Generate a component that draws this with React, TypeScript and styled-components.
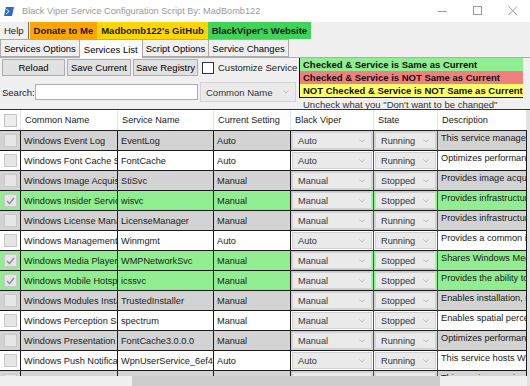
import React from 'react';
import styled, { createGlobalStyle } from 'styled-components';

const GlobalStyle = createGlobalStyle`
  html, body {
    margin: 0;
    padding: 0;
    background: #fff;
  }
  body {
    font-family: 'Liberation Sans', Arial, sans-serif;
    overflow: hidden;
  }
`;

const Window = styled.div`
  display: flex;
  flex-direction: column;
  width: 530px;
  height: 386px;
  overflow: hidden;
  background: #f0f0f0;
`;

const TitleBar = styled.div`
  display: flex;
  align-items: center;
  height: 22px;
  flex-shrink: 0;
  padding-left: 4px;
  background: #fff;
  color: #9a9a9a;
  font-size: 9.2px;
`;

const TitleText = styled.span`
  margin-left: 8px;
`;

const WindowControls = styled.div`
  display: flex;
  margin-left: auto;
  height: 100%;
`;

const ControlButton = styled.div`
  display: flex;
  align-items: center;
  justify-content: center;
  width: 35px;
  height: 100%;
`;

const MenuBar = styled.div`
  display: flex;
  height: 17px;
  flex-shrink: 0;
  background: #f0f0f0;
  font-size: 9.5px;
`;

const MenuItem = styled.div<{ $bg?: string }>`
  display: flex;
  align-items: center;
  padding: 0 4px;
  background: ${(p) => p.$bg || 'transparent'};
  font-weight: ${(p) => (p.$bg ? 700 : 400)};
  color: #1a1a1a;
`;

const MenuSeparator = styled.div`
  width: 1px;
  margin: 0 1px 0 0;
  background: #707070;
`;

const TabStrip = styled.div`
  display: flex;
  align-items: flex-end;
  height: 18px;
  flex-shrink: 0;
  font-size: 9.5px;
`;

const Tab = styled.div<{ $active?: boolean }>`
  display: flex;
  align-items: center;
  height: ${(p) => (p.$active ? '18px' : '16px')};
  padding: 0 ${(p) => (p.$active ? '4px' : '3px')};
  margin-bottom: ${(p) => (p.$active ? '-1px' : '0')};
  margin-right: -1px;
  border: 1px solid #acacac;
  border-bottom: ${(p) => (p.$active ? 'none' : '1px solid #acacac')};
  background: ${(p) => (p.$active ? '#fff' : '#f0f0f0')};
  color: #000;
  position: relative;
  z-index: ${(p) => (p.$active ? 1 : 0)};
`;

const Content = styled.div`
  display: flex;
  flex-direction: column;
  flex: 1;
  min-height: 0;
  border-top: 1px solid #acacac;
`;

const Toolbar = styled.div`
  display: grid;
  grid-template-columns: 298px 1fr;
  height: 51px;
  flex-shrink: 0;
  font-size: 9.5px;
`;

const ToolColumn = styled.div`
  display: flex;
  flex-direction: column;
  gap: 6px;
  padding: 1px 0 0 2px;
`;

const ButtonRow = styled.div`
  display: flex;
  align-items: center;
  gap: 2px;
  height: 17px;
`;

const Button = styled.div<{ $width: number }>`
  display: flex;
  align-items: center;
  justify-content: center;
  width: ${(p) => p.$width}px;
  height: 17px;
  box-sizing: border-box;
  border: 1px solid #adadad;
  background: #e1e1e1;
  color: #000;
`;

const CheckLabel = styled.label`
  display: flex;
  align-items: center;
  gap: 4px;
  margin-left: 2px;
  color: #1a1a1a;
`;

const BoxCheck = styled.span`
  width: 12px;
  height: 12px;
  box-sizing: border-box;
  border: 1px solid #333;
  background: #fff;
`;

const SearchRow = styled.div`
  display: flex;
  align-items: center;
  gap: 2px;
  height: 20px;
`;

const SearchLabel = styled.span`
  width: 31px;
  color: #1a1a1a;
`;

const SearchInput = styled.div`
  width: 163px;
  height: 16px;
  box-sizing: border-box;
  border: 1px solid #abadb3;
  background: #fff;
`;

const Combo = styled.div<{ $width: number; $height: number }>`
  display: flex;
  align-items: center;
  justify-content: space-between;
  width: ${(p) => p.$width}px;
  height: ${(p) => p.$height}px;
  box-sizing: border-box;
  padding: 0 6px 0 5px;
  border: 1px solid #d2d2d2;
  background: #eaeaea;
  color: #333;
  overflow: hidden;
  white-space: nowrap;
`;

const LegendColumn = styled.div`
  display: flex;
  flex-direction: column;
  padding-left: 1px;
`;

const Legend = styled.div`
  display: flex;
  flex-direction: column;
  width: 223px;
  border-left: 1px solid #111;
  border-bottom: 1px solid #111;
`;

const LegendRow = styled.div<{ $bg: string }>`
  height: 13px;
  line-height: 13px;
  padding-left: 3px;
  background: ${(p) => p.$bg};
  font-weight: 700;
  color: #111;
  white-space: nowrap;
`;

const Note = styled.div`
  padding: 1px 0 0 4px;
  line-height: 11px;
  color: #333;
  white-space: nowrap;
`;

const GridArea = styled.div`
  display: flex;
  flex: 1;
  min-height: 0;
  border-top: 1px solid #333;
  background: #fff;
`;

const GridMain = styled.div`
  display: flex;
  flex-direction: column;
  flex: 1;
  min-width: 0;
`;

const GridViewport = styled.div`
  flex: 1;
  min-height: 0;
  overflow: hidden;
  font-size: 9.2px;
`;

const cols = '21px 97px 96px 77px 83px 64px 1fr';

const HeaderRow = styled.div`
  display: grid;
  grid-template-columns: ${cols};
  height: 20px;
  border-bottom: 1px solid #222;
  background: #fff;
`;

const HeaderCell = styled.div<{ $first?: boolean }>`
  display: flex;
  align-items: center;
  justify-content: ${(p) => (p.$first ? 'center' : 'flex-start')};
  padding-left: ${(p) => (p.$first ? '0' : '4px')};
  border-right: 1px solid #e4e4e4;
  color: #1a1a1a;
  white-space: nowrap;
  overflow: hidden;
`;

const Row = styled.div<{ $bg: string }>`
  display: grid;
  grid-template-columns: ${cols};
  height: 19px;
  border-bottom: 1px solid #1a1a1a;
  background: ${(p) => p.$bg};
`;

const Cell = styled.div<{ $top?: boolean }>`
  display: flex;
  align-items: ${(p) => (p.$top ? 'flex-start' : 'center')};
  padding: ${(p) => (p.$top ? '2px 0 0 3px' : '0 0 0 3px')};
  border-right: 1px solid #1a1a1a;
  color: #1a1a1a;
  white-space: nowrap;
  overflow: hidden;
`;

const ComboCell = styled.div`
  display: flex;
  align-items: center;
  padding: 0 1px;
  border-right: 1px solid #555;
  overflow: hidden;
`;

const CheckCell = styled.div`
  display: flex;
  align-items: center;
  justify-content: center;
  border-right: 1px solid #1a1a1a;
`;

const GridCheck = styled.span<{ $header?: boolean }>`
  display: flex;
  align-items: center;
  justify-content: center;
  width: 13px;
  height: 13px;
  box-sizing: border-box;
  border: 1px solid ${(p) => (p.$header ? '#c4c4c4' : '#c8c8c8')};
  background: ${(p) => (p.$header ? '#ececec' : '#e6e6e6')};
`;

const HScroll = styled.div`
  display: flex;
  height: 10px;
  flex-shrink: 0;
  background: #f0f0f0;
`;

const HThumb = styled.div`
  width: 308px;
  height: 100%;
  margin-left: 132px;
  background: #cdcdcd;
`;

const VScroll = styled.div`
  width: 3px;
  background: #e2e2e2;
`;

const Chevron = () => (
  <svg width="6" height="4" viewBox="0 0 6 4">
    <path d="M0.5 0.5 L3 3 L5.5 0.5" fill="none" stroke="#b4b4b4" strokeWidth="0.8" />
  </svg>
);

const CheckMark = () => (
  <svg width="9" height="8" viewBox="0 0 9 8">
    <path d="M1 4 L3.5 6.5 L8 1" fill="none" stroke="#8a8a8a" strokeWidth="1.3" />
  </svg>
);

type Service = {
  name: string;
  svc: string;
  current: string;
  viper: string;
  state: string;
  desc: string;
  checked?: boolean;
};

const services: Service[] = [
  { name: 'Windows Event Log', svc: 'EventLog', current: 'Auto', viper: 'Auto', state: 'Running', desc: 'This service manages events and event logs.' },
  { name: 'Windows Font Cache Service', svc: 'FontCache', current: 'Auto', viper: 'Auto', state: 'Running', desc: 'Optimizes performance of applications by caching.' },
  { name: 'Windows Image Acquisition (WIA)', svc: 'StiSvc', current: 'Manual', viper: 'Manual', state: 'Stopped', desc: 'Provides image acquisition services.' },
  { name: 'Windows Insider Service', svc: 'wisvc', current: 'Manual', viper: 'Manual', state: 'Stopped', desc: 'Provides infrastructure support for the Windows Insider Program.', checked: true },
  { name: 'Windows License Manager Service', svc: 'LicenseManager', current: 'Manual', viper: 'Manual', state: 'Running', desc: 'Provides infrastructure support for the Microsoft Store.' },
  { name: 'Windows Management Instrumentation', svc: 'Winmgmt', current: 'Auto', viper: 'Auto', state: 'Running', desc: 'Provides a common interface and object model.' },
  { name: 'Windows Media Player Network Sharing Service', svc: 'WMPNetworkSvc', current: 'Manual', viper: 'Manual', state: 'Stopped', desc: 'Shares Windows Media Player libraries.', checked: true },
  { name: 'Windows Mobile Hotspot Service', svc: 'icssvc', current: 'Manual', viper: 'Manual', state: 'Stopped', desc: 'Provides the ability to share a cellular data connection.', checked: true },
  { name: 'Windows Modules Installer', svc: 'TrustedInstaller', current: 'Manual', viper: 'Manual', state: 'Stopped', desc: 'Enables installation, modification, and removal.' },
  { name: 'Windows Perception Service', svc: 'spectrum', current: 'Manual', viper: 'Manual', state: 'Stopped', desc: 'Enables spatial perception.' },
  { name: 'Windows Presentation Foundation Font Cache 3.0.0.0', svc: 'FontCache3.0.0.0', current: 'Manual', viper: 'Manual', state: 'Running', desc: 'Optimizes performance of Windows Presentation Foundation.' },
  { name: 'Windows Push Notifications User Service', svc: 'WpnUserService_6ef4b', current: 'Auto', viper: 'Auto', state: 'Running', desc: 'This service hosts Windows notification platform.' },
  { name: 'Windows Push Notifications System Service', svc: 'WpnService', current: 'Auto', viper: 'Auto', state: 'Running', desc: 'This service runs in session 0.' },
];

const rowColor = (s: Service, i: number) => {
  if (s.checked) return '#90ee90';
  return i % 2 === 0 ? '#d3d3d3' : '#fff';
};

const PowerShellIcon = () => (
  <svg width="10" height="9" viewBox="0 0 10 9">
    <path d="M2 0 H10 L8 9 H0 Z" fill="#2d6cc0" />
    <path d="M2.6 2 L5 4.5 L2 7" fill="none" stroke="#fff" strokeWidth="1" />
  </svg>
);

const headers = ['Common Name', 'Service Name', 'Current Setting', 'Black Viper', 'State', 'Description'];

const App = () => {
  return (
    <>
      <GlobalStyle />
      <Window>
        <TitleBar>
          <PowerShellIcon />
          <TitleText>Black Viper Service Configuration Script By: MadBomb122</TitleText>
          <WindowControls>
            <ControlButton>
              <svg width="10" height="10" viewBox="0 0 10 10">
                <path d="M0 5.5 H9" stroke="#9a9a9a" strokeWidth="1" />
              </svg>
            </ControlButton>
            <ControlButton>
              <svg width="10" height="10" viewBox="0 0 10 10">
                <rect x="0.5" y="0.5" width="8" height="8" fill="none" stroke="#9a9a9a" strokeWidth="1" />
              </svg>
            </ControlButton>
            <ControlButton>
              <svg width="10" height="10" viewBox="0 0 10 10">
                <path d="M0.5 0.5 L9 9 M9 0.5 L0.5 9" stroke="#9a9a9a" strokeWidth="1" />
              </svg>
            </ControlButton>
          </WindowControls>
        </TitleBar>

        <MenuBar>
          <MenuItem>Help</MenuItem>
          <MenuSeparator />
          <MenuItem $bg="#ffa500">Donate to Me</MenuItem>
          <MenuItem $bg="#ffd700">Madbomb122's GitHub</MenuItem>
          <MenuItem $bg="#3fd35a">BlackViper's Website</MenuItem>
        </MenuBar>

        <TabStrip>
          <Tab>Services Options</Tab>
          <Tab $active>Services List</Tab>
          <Tab>Script Options</Tab>
          <Tab>Service Changes</Tab>
        </TabStrip>

        <Content>
          <Toolbar>
            <ToolColumn>
              <ButtonRow>
                <Button $width={63}>Reload</Button>
                <Button $width={64}>Save Current</Button>
                <Button $width={65}>Save Registry</Button>
                <CheckLabel>
                  <BoxCheck />
                  Customize Service
                </CheckLabel>
              </ButtonRow>
              <SearchRow>
                <SearchLabel>Search:</SearchLabel>
                <SearchInput />
                <Combo $width={96} $height={20}>
                  Common Name
                  <Chevron />
                </Combo>
              </SearchRow>
            </ToolColumn>
            <LegendColumn>
              <Legend>
                <LegendRow $bg="#90ee90">Checked &amp; Service is Same as Current</LegendRow>
                <LegendRow $bg="#f08080">Checked &amp; Service is NOT Same as Current</LegendRow>
                <LegendRow $bg="#ffff66">NOT Checked &amp; Service is NOT Same as Current</LegendRow>
              </Legend>
              <Note>Uncheck what you "Don't want to be changed"</Note>
            </LegendColumn>
          </Toolbar>

          <GridArea>
            <GridMain>
              <GridViewport>
                <HeaderRow>
                  <HeaderCell $first>
                    <GridCheck $header />
                  </HeaderCell>
                  {headers.map((h) => (
                    <HeaderCell key={h}>{h}</HeaderCell>
                  ))}
                </HeaderRow>
                {services.map((s, i) => (
                  <Row key={s.svc} $bg={rowColor(s, i)}>
                    <CheckCell>
                      <GridCheck>{s.checked && <CheckMark />}</GridCheck>
                    </CheckCell>
                    <Cell>{s.name}</Cell>
                    <Cell>{s.svc}</Cell>
                    <Cell>{s.current}</Cell>
                    <ComboCell>
                      <Combo $width={81} $height={17}>
                        {s.viper}
                        <Chevron />
                      </Combo>
                    </ComboCell>
                    <ComboCell>
                      <Combo $width={62} $height={17}>
                        {s.state}
                        <Chevron />
                      </Combo>
                    </ComboCell>
                    <Cell $top>{s.desc}</Cell>
                  </Row>
                ))}
              </GridViewport>
              <HScroll>
                <HThumb />
              </HScroll>
            </GridMain>
            <VScroll />
          </GridArea>
        </Content>
      </Window>
    </>
  );
};

export default App;
